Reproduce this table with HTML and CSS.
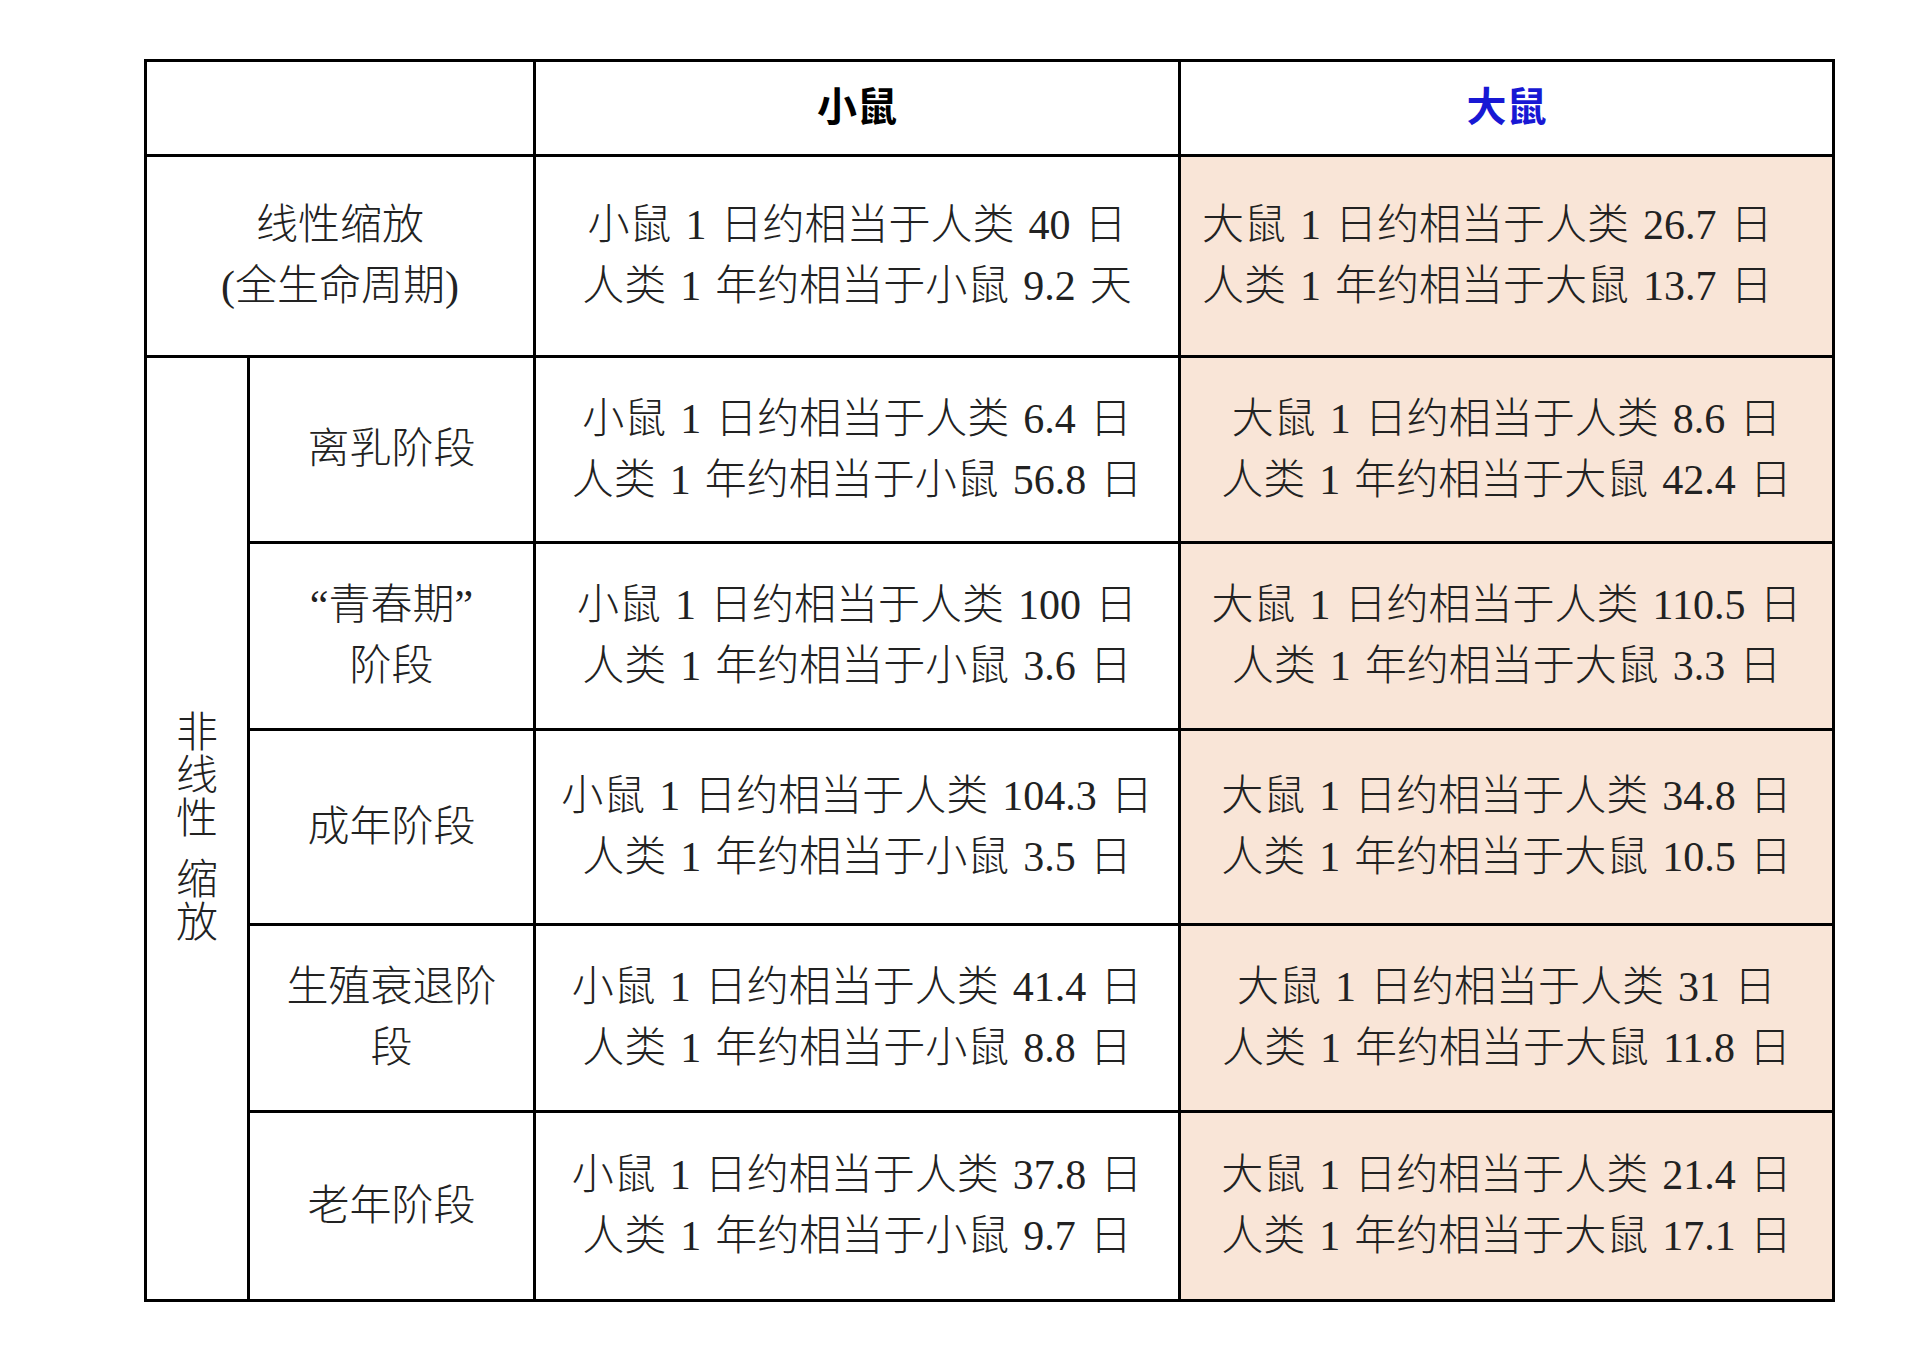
FILE: index.html
```html
<!DOCTYPE html>
<html lang="zh-CN">
<head>
<meta charset="utf-8">
<title>小鼠与大鼠年龄换算</title>
<link rel="stylesheet" href="styles.css">
</head>
<body>
<div class="table">
  <div class="cell span2 head"></div>
  <div class="cell head mouse">小鼠</div>
  <div class="cell head rat">大鼠</div>

  <div class="cell span2 label">线性缩放<br>(全生命周期)</div>
  <div class="cell">小鼠 1 日约相当于人类 40 日<br>人类 1 年约相当于小鼠 9.2 天</div>
  <div class="cell shade left">大鼠 1 日约相当于人类 26.7 日<br>人类 1 年约相当于大鼠 13.7 日</div>

  <div class="cell vlabel"><div class="vtext"><span>非</span><span>线</span><span>性</span><span class="gap">缩</span><span>放</span></div></div>

  <div class="cell label">离乳阶段</div>
  <div class="cell">小鼠 1 日约相当于人类 6.4 日<br>人类 1 年约相当于小鼠 56.8 日</div>
  <div class="cell shade">大鼠 1 日约相当于人类 8.6 日<br>人类 1 年约相当于大鼠 42.4 日</div>

  <div class="cell label">“青春期”<br>阶段</div>
  <div class="cell">小鼠 1 日约相当于人类 100 日<br>人类 1 年约相当于小鼠 3.6 日</div>
  <div class="cell shade">大鼠 1 日约相当于人类 110.5 日<br>人类 1 年约相当于大鼠 3.3 日</div>

  <div class="cell label">成年阶段</div>
  <div class="cell">小鼠 1 日约相当于人类 104.3 日<br>人类 1 年约相当于小鼠 3.5 日</div>
  <div class="cell shade">大鼠 1 日约相当于人类 34.8 日<br>人类 1 年约相当于大鼠 10.5 日</div>

  <div class="cell label">生殖衰退阶<br>段</div>
  <div class="cell">小鼠 1 日约相当于人类 41.4 日<br>人类 1 年约相当于小鼠 8.8 日</div>
  <div class="cell shade">大鼠 1 日约相当于人类 31 日<br>人类 1 年约相当于大鼠 11.8 日</div>

  <div class="cell label">老年阶段</div>
  <div class="cell">小鼠 1 日约相当于人类 37.8 日<br>人类 1 年约相当于小鼠 9.7 日</div>
  <div class="cell shade">大鼠 1 日约相当于人类 21.4 日<br>人类 1 年约相当于大鼠 17.1 日</div>
</div>
</body>
</html>
```

FILE: styles.css
```css
html, body {
  margin: 0;
  background: #ffffff;
}

body {
  padding: 59px 0 0 144px;
  font-family: "Liberation Serif", "Noto Sans CJK SC", serif;
  font-size: 42px;
  color: #222222;
}

.table {
  display: grid;
  grid-template-columns: 103px 286px 645px 654px;
  grid-template-rows: 95px 201px 186px 187px 195px 187px 189px;
  width: 1691px;
  box-sizing: border-box;
  border-left: 3px solid #000;
  border-top: 3px solid #000;
}

.cell {
  box-sizing: border-box;
  border-right: 3px solid #000;
  border-bottom: 3px solid #000;
  display: flex;
  align-items: center;
  justify-content: center;
  text-align: center;
  line-height: 61px;
  word-spacing: 3.5px;
  font-weight: 300;
  white-space: nowrap;
}

.span2 {
  grid-column: span 2;
}

.head {
  font-weight: 700;
  font-family: "Noto Sans CJK SC", sans-serif;
  font-size: 40px;
  color: #000;
  padding-bottom: 7px;
}

.rat {
  color: #1818d4;
}

.shade {
  background: #f9e5d7;
}

.left {
  justify-content: flex-start;
  text-align: left;
  padding-left: 21px;
}

.label {
  font-weight: 300;
}

.vlabel {
  grid-column: 1;
  grid-row: 3 / 8;
}

.vtext {
  display: flex;
  flex-direction: column;
  align-items: center;
  line-height: 43px;
}

.vtext .gap {
  margin-top: 18px;
}
```
